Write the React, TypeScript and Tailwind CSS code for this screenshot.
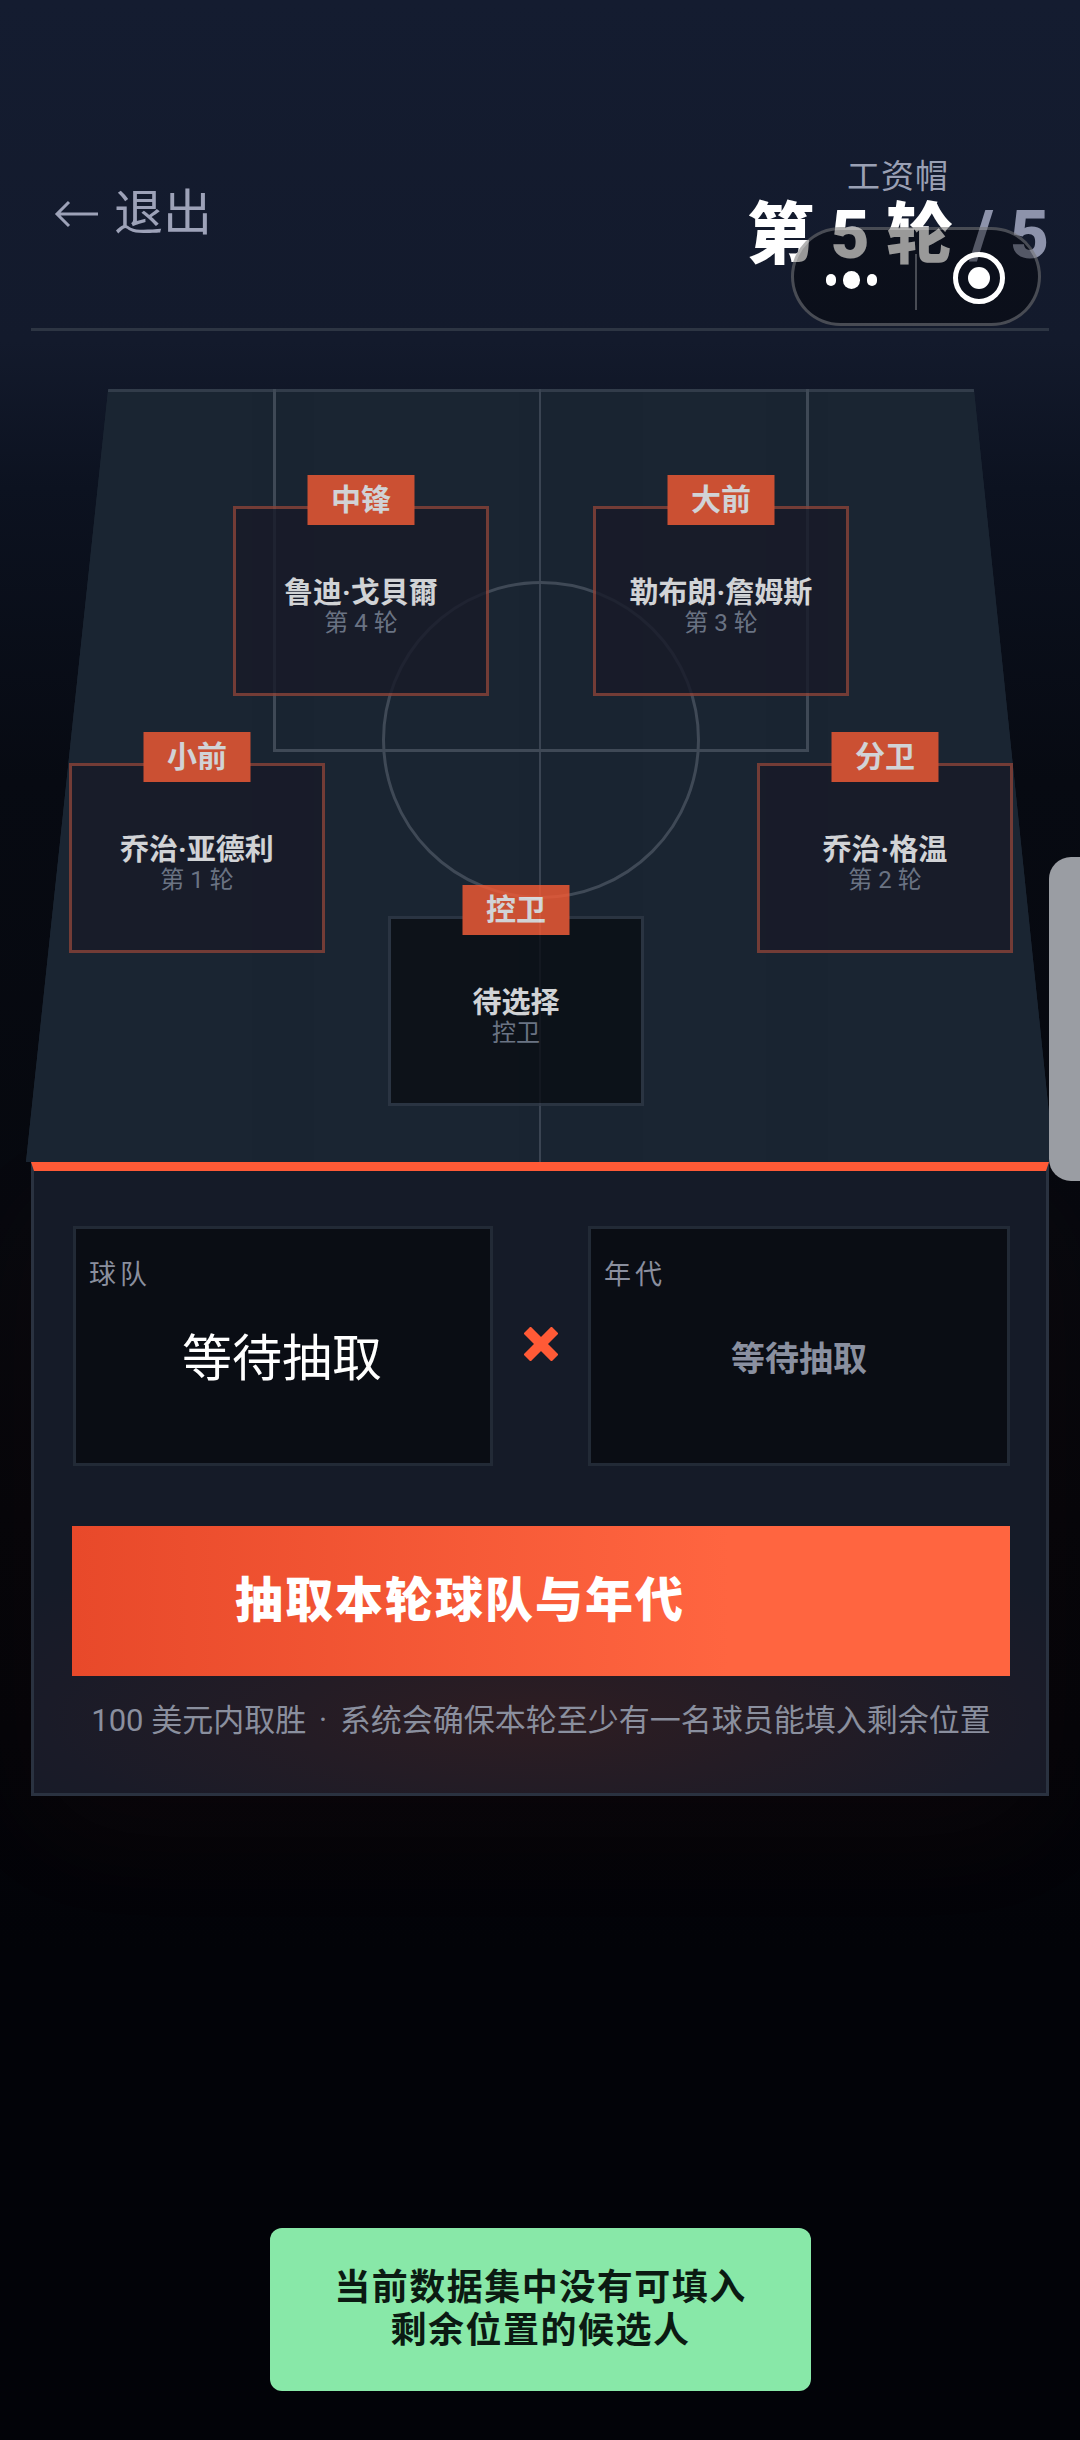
const font = { fontFamily: '"Roboto", "Noto Sans CJK SC", sans-serif' }

const PLAYED = [
  { pos: '中锋', name: '鲁迪·戈貝爾', round: '第 4 轮', box: 'left-[207px] top-[117px]' },
  { pos: '大前', name: '勒布朗·詹姆斯', round: '第 3 轮', box: 'left-[567px] top-[117px]' },
  { pos: '小前', name: '乔治·亚德利', round: '第 1 轮', box: 'left-[43px] top-[374px]' },
  { pos: '分卫', name: '乔治·格温', round: '第 2 轮', box: 'left-[731px] top-[374px]' },
]

function Slot({ pos, name, round, box, empty }: { pos: string; name: string; round: string; box: string; empty?: boolean }) {
  return (
    <div
      className={`absolute ${box} w-[256px] h-[190px] border-[3px] opacity-80 flex flex-col items-center justify-center pt-[12px] ${
        empty ? 'border-[#2f3846] bg-[#0a0e14]' : 'border-[#8a4238] bg-[#181a28]'
      }`}
    >
      <div className="absolute left-1/2 -translate-x-1/2 top-[-34px] w-[107px] h-[50px] bg-[#f85b34] text-white text-[30px] leading-[50px] font-bold text-center">
        {pos}
      </div>
      <div className="text-[29px] leading-[32px] font-bold text-white">{name}</div>
      <div className="text-[24px] leading-[28px] text-[#7f8798]">{round}</div>
    </div>
  )
}

function DrawBox({ label, children }: { label: string; children: React.ReactNode }) {
  return (
    <div className="h-[240px] border-[3px] border-[#222a36] bg-[#0a0d14] flex flex-col pt-[26px] pb-[40px] px-[13px]">
      <div className="text-[27px] leading-[40px] tracking-[4px] text-[#8a8f9e]">{label}</div>
      <div className="flex-1 flex items-center justify-center">{children}</div>
    </div>
  )
}

export default function App() {
  return (
    <div
      className="relative w-[1080px] h-[2440px] overflow-hidden bg-[linear-gradient(180deg,#141c30_0%,#131a2c_14%,#0c1220_20%,#070a12_32%,#06080e_50%,#04050a_62%,#020308_80%,#020308_100%)]"
      style={font}
    >
      <div className="relative px-[31px]">
        {/* header */}
        <header className="flex justify-between pt-[157px] pb-[55px] border-b-[3px] border-[#2d3543]">
          <div className="flex items-center gap-[16px] mt-[29px] h-[56px] text-[#9da2b8] text-[49px] leading-[56px] pl-[23px]">
            <svg width="44" height="28" viewBox="0 0 44 28" fill="none" stroke="#9da2b8" strokeWidth="3">
              <path d="M44 14H3M15 2 3 14l12 12" />
            </svg>
            退出
          </div>
          <div className="flex flex-col items-center">
            <div className="text-[33px] leading-[40px] tracking-[1px] text-[#9aa0b4]">工资帽</div>
            <div className="text-[67px] leading-[76px] font-black text-white whitespace-pre">
              第 5 轮 <span className="text-[#8d93ab]">/ 5</span>
            </div>
          </div>
        </header>

        {/* court */}
        <div className="relative mt-[58px] mx-[-5px] h-[773px]">
          <div className="absolute inset-0 [clip-path:polygon(8%_0,92.2%_0,100%_100%,0_100%)] bg-[#1a2532] bg-[linear-gradient(90deg,#1a2532_0%,#1a2532_22%,#192431_22%,#192431_28%,#1a2532_28%,#1a2532_48%,#192431_48%,#192431_60%,#1a2532_60%,#1a2532_72%,#192431_72%,#192431_78%,#1a2532_78%)]">
            <div className="absolute inset-x-0 top-0 h-[3px] bg-[#323c4a]" />
            <div className="absolute left-[513px] top-0 bottom-0 w-[2px] bg-[#3a4452]" />
            <div className="absolute left-[247px] top-0 w-[536px] h-[363px] border-[3px] border-t-0 border-[#3f4956]" />
            <div className="absolute left-[356px] top-[192px] w-[318px] h-[318px] rounded-full border-[3px] border-[#3f4956]" />
          </div>
          {PLAYED.map((s) => (
            <Slot key={s.pos} {...s} />
          ))}
          <Slot pos="控卫" name="待选择" round="控卫" box="left-[362px] top-[527px]" empty />
        </div>

        {/* draw panel */}
        <section className="border-[3px] border-t-[9px] border-[#2a3240] border-t-[#ff5a36] bg-[radial-gradient(ellipse_70%_30%_at_50%_88%,#2e1d22_0%,#1a1b28_70%,#151b28_100%)] pl-[39px] pr-[37px] pt-[55px] h-[634px] shadow-[0_40px_120px_rgba(255,90,54,0.04)]">
          <div className="grid grid-cols-[420px_95px_422px] items-center">
            <DrawBox label="球队">
              <span className="text-[50px] leading-[60px] text-white -ml-[2px]">等待抽取</span>
            </DrawBox>
            <div className="flex justify-center -mt-[4px]">
              <svg width="34" height="34" viewBox="0 0 34 34" stroke="#ff5a36" strokeWidth="10">
                <path d="M3 3 31 31M31 3 3 31" />
              </svg>
            </div>
            <DrawBox label="年代">
              <span className="text-[34px] leading-[44px] font-bold text-[#8a90a0]">等待抽取</span>
            </DrawBox>
          </div>
          <button className="mt-[60px] -ml-[1px] w-[938px] h-[150px] bg-[linear-gradient(90deg,#e8492a_0%,#ff6540_70%,#ff6540_100%)] text-white text-[48px] font-black tracking-[2px] pr-[162px]">
            抽取本轮球队与年代
          </button>
          <p className="mt-[25px] text-[31px] leading-[40px] text-[#8a8f9e] whitespace-nowrap text-center">
            100 美元内取胜 <span className="mx-[5px]">·</span> 系统会确保本轮至少有一名球员能填入剩余位置
          </p>
        </section>
      </div>

      {/* phone overlays */}
      <div className="absolute left-[791px] top-[227px] w-[250px] h-[99px] rounded-full border-[3px] border-white/25 bg-black/40">
        <div className="absolute left-[32px] top-[41px] flex items-center gap-[7px]">
          <span className="w-[10px] h-[12px] rounded-full bg-white" />
          <span className="w-[17px] h-[18px] rounded-full bg-white" />
          <span className="w-[10px] h-[12px] rounded-full bg-white" />
        </div>
        <div className="absolute left-[121px] top-[24px] w-[2px] h-[56px] bg-white/25" />
        <div className="absolute left-[159px] top-[22px] w-[52px] h-[52px] rounded-full border-[5px] border-white flex items-center justify-center">
          <span className="w-[22px] h-[22px] rounded-full bg-white" />
        </div>
      </div>
      <div className="absolute left-[1049px] top-[857px] w-[40px] h-[324px] rounded-l-[22px] bg-[#9a9da3]" />

      {/* toast */}
      <div className="absolute left-[270px] top-[2228px] w-[541px] h-[163px] rounded-[12px] bg-[#88e8a8] flex items-center justify-center text-center text-[36px] leading-[43px] font-bold tracking-[1.5px] text-[#0b1a12]">
        当前数据集中没有可填入
        <br />
        剩余位置的候选人
      </div>
    </div>
  )
}
